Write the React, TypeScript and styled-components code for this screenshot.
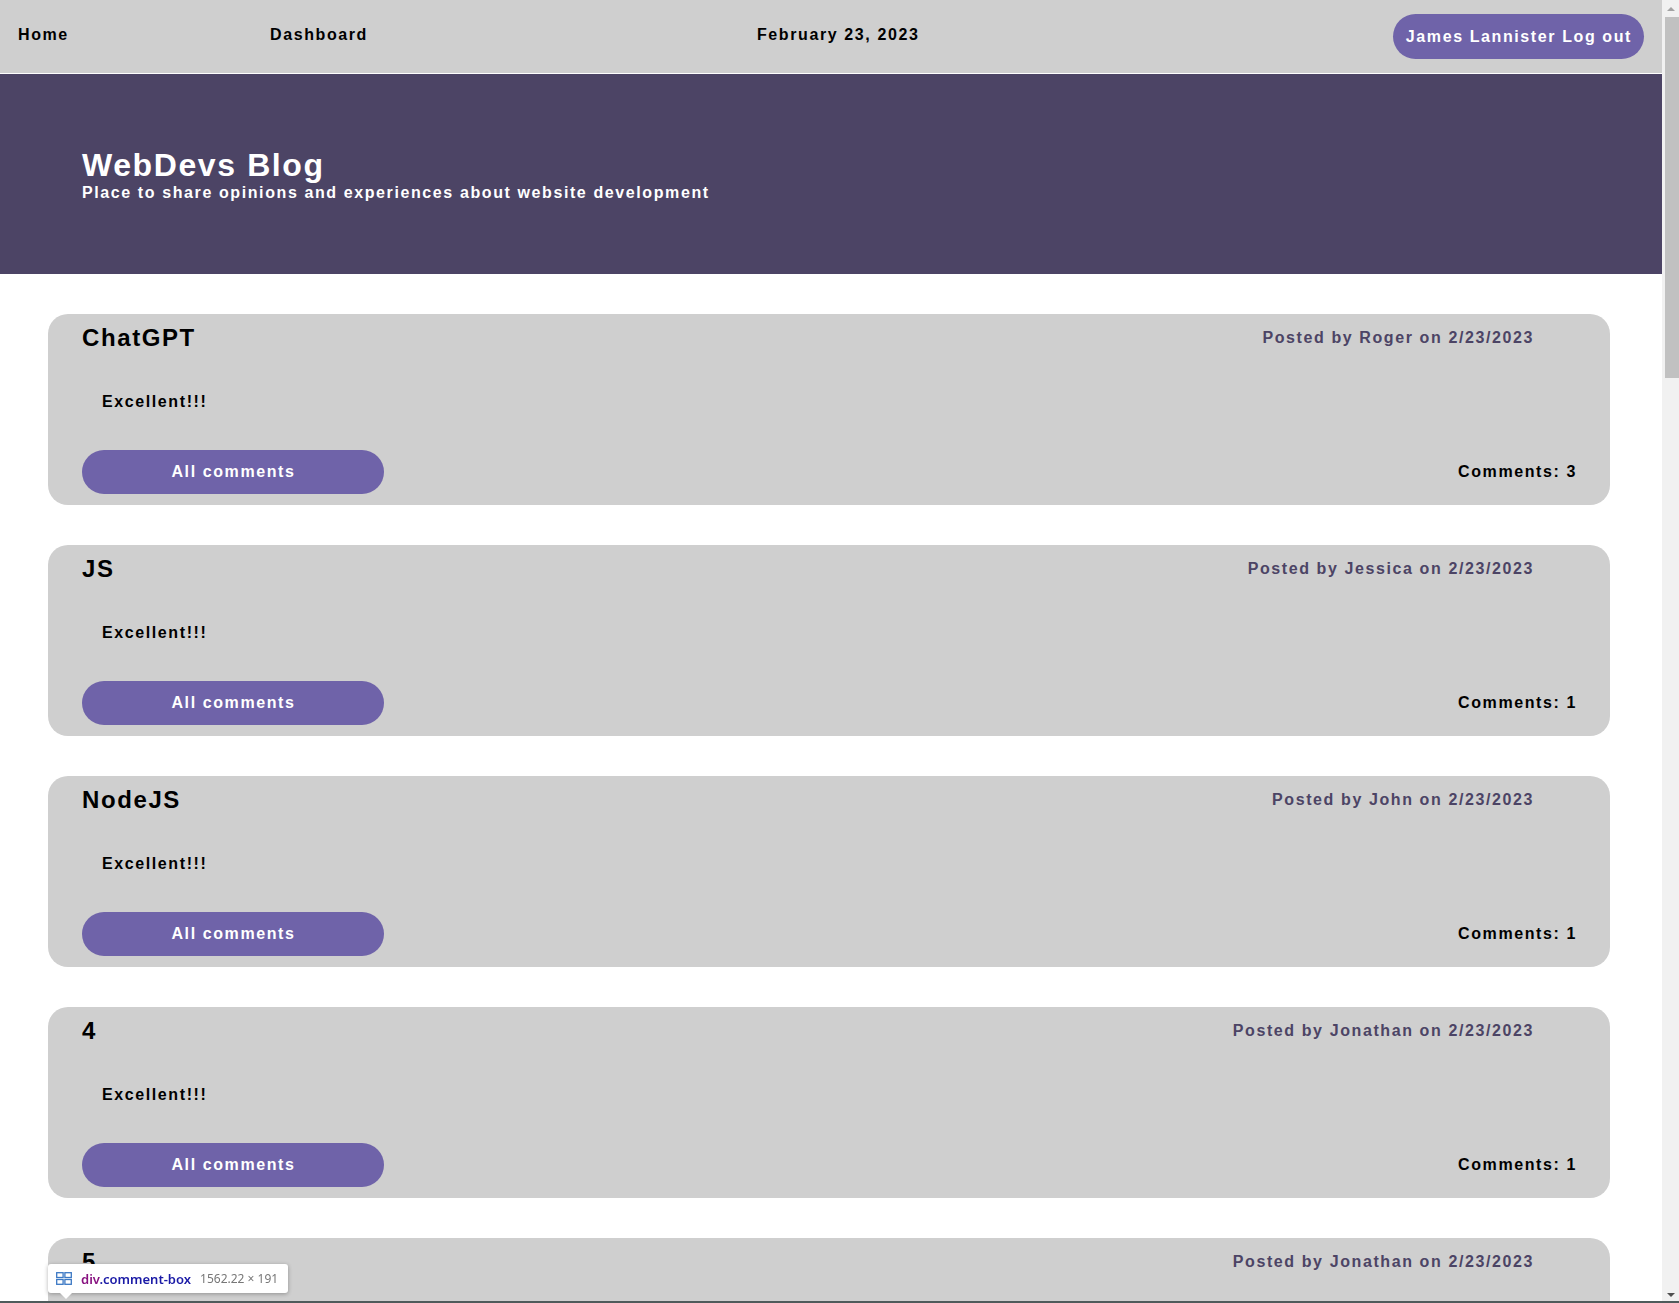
import React from "react";
import styled, { createGlobalStyle } from "styled-components";

const GlobalStyle = createGlobalStyle`
  html, body {
    margin: 0;
    padding: 0;
    background: #ffffff;
    font-family: "Liberation Sans", Arial, sans-serif;
  }
`;

const Page = styled.div`
  display: flex;
  flex-direction: column;
  margin-right: 17px;
  font-family: "Liberation Sans", Arial, sans-serif;
  font-weight: 700;
  letter-spacing: 1.6px;
`;

const NavBar = styled.nav`
  display: flex;
  align-items: center;
  height: 73px;
  padding: 0 18px;
  background: #cfcfcf;
  border-bottom: 1px solid #ffffff;
`;

const NavLeft = styled.div`
  display: flex;
  align-items: center;
  width: 739px;
  margin-bottom: 4px;
`;

const NavLink = styled.a<{ $w?: number }>`
  color: #000;
  font-size: 16px;
  font-weight: 700;
  text-decoration: none;
  width: ${(p) => (p.$w ? `${p.$w}px` : "auto")};
`;

const NavDate = styled.span`
  color: #000;
  font-size: 16px;
  font-weight: 700;
  flex: 1;
  margin-bottom: 4px;
`;

const PillButton = styled.button<{ $width?: number; $height: number }>`
  display: flex;
  align-items: center;
  justify-content: center;
  height: ${(p) => p.$height}px;
  width: ${(p) => (p.$width ? `${p.$width}px` : "auto")};
  padding: 0 12px 0 13px;
  border: none;
  border-radius: ${(p) => p.$height / 2}px;
  background: #6f63a9;
  color: #ffffff;
  font-family: "Liberation Sans", Arial, sans-serif;
  font-size: 16px;
  font-weight: 700;
  letter-spacing: 1.6px;
  cursor: pointer;
`;

const Hero = styled.header`
  box-sizing: border-box;
  display: flex;
  flex-direction: column;
  justify-content: center;
  height: 200px;
  padding: 3px 0 0 82px;
  background: #4c4465;
  color: #ffffff;
`;

const HeroTitle = styled.h1`
  margin: 0;
  font-size: 32px;
  line-height: 32px;
  font-weight: 700;
  letter-spacing: 1.6px;
`;

const HeroSubtitle = styled.p`
  margin: 3px 0 0 0;
  font-size: 16px;
  font-weight: 700;
  letter-spacing: 1.6px;
`;

const PostList = styled.main`
  display: flex;
  flex-direction: column;
  gap: 40px;
  padding: 40px 0 40px 48px;
`;

const CommentBox = styled.article`
  box-sizing: border-box;
  display: flex;
  flex-direction: column;
  width: 1562px;
  height: 191px;
  padding: 10px 33px 11px 34px;
  background: #cfcfcf;
  border-radius: 20px;
`;

const CardHeader = styled.div`
  display: flex;
  align-items: center;
  justify-content: space-between;
`;

const CardTitle = styled.h2`
  margin: 0;
  font-size: 24px;
  font-weight: 700;
  color: #000;
  letter-spacing: 1.6px;
`;

const PostedBy = styled.span`
  margin-right: 43px;
  font-size: 16px;
  font-weight: 700;
  color: #4c4465;
`;

const CardBody = styled.p`
  margin: 41px 0 39px 20px;
  font-size: 16px;
  font-weight: 700;
  color: #000;
`;

const CardFooter = styled.div`
  display: flex;
  align-items: center;
  justify-content: space-between;
`;

const CommentCount = styled.span`
  font-size: 16px;
  font-weight: 700;
  color: #000;
`;

const ScrollTrack = styled.div`
  position: fixed;
  top: 0;
  right: 0;
  bottom: 0;
  width: 17px;
  display: flex;
  flex-direction: column;
  align-items: center;
  background: #f1f1f1;
`;

const ScrollArrow = styled.div<{ $down?: boolean }>`
  width: 17px;
  height: 17px;
  display: flex;
  align-items: center;
  justify-content: center;
  &::before {
    content: "";
    border-left: 4px solid transparent;
    border-right: 4px solid transparent;
    ${(p) => (p.$down ? "border-top: 4px solid #505050;" : "border-bottom: 4px solid #a3a3a3;")}
  }
`;

const ScrollThumb = styled.div`
  width: 14px;
  height: 361px;
  margin-left: 2px;
  background: #c1c1c1;
`;

const ScrollSpace = styled.div`
  flex: 1;
`;

const InspectTip = styled.div`
  position: fixed;
  left: 48px;
  top: 1264px;
  display: flex;
  align-items: center;
  gap: 9px;
  height: 29px;
  padding: 0 10px 0 8px;
  background: #ffffff;
  border-radius: 3px;
  box-shadow: 0 1px 4px rgba(0, 0, 0, 0.3);
  font-family: "Noto Sans", "Liberation Sans", sans-serif;
  font-size: 13px;
  letter-spacing: 0;
  &::after {
    content: "";
    position: absolute;
    left: 12px;
    bottom: -6px;
    border-left: 6px solid transparent;
    border-right: 6px solid transparent;
    border-top: 6px solid #ffffff;
  }
`;

const TipTag = styled.span`
  font-weight: 600;
  color: #881280;
`;

const TipClass = styled.span`
  font-weight: 600;
  color: #1a1aa6;
`;

const TipSize = styled.span`
  font-weight: 400;
  font-size: 12px;
  color: #777;
`;

const BottomEdge = styled.div`
  position: fixed;
  left: 0;
  right: 0;
  bottom: 0;
  height: 2px;
  background: #4f5b5b;
`;

type Post = { title: string; author: string; comments: number };

const posts: Post[] = [
  { title: "ChatGPT", author: "Roger", comments: 3 },
  { title: "JS", author: "Jessica", comments: 1 },
  { title: "NodeJS", author: "John", comments: 1 },
  { title: "4", author: "Jonathan", comments: 1 },
  { title: "5", author: "Jonathan", comments: 1 },
  { title: "6", author: "Jonathan", comments: 1 },
  { title: "7", author: "Jonathan", comments: 1 },
  { title: "8", author: "Jonathan", comments: 1 },
  { title: "9", author: "Jonathan", comments: 1 },
  { title: "10", author: "Jonathan", comments: 1 },
  { title: "11", author: "Jonathan", comments: 1 },
  { title: "12", author: "Jonathan", comments: 1 },
  { title: "13", author: "Jonathan", comments: 1 },
  { title: "14", author: "Jonathan", comments: 1 },
  { title: "15", author: "Jonathan", comments: 1 },
  { title: "16", author: "Jonathan", comments: 1 },
  { title: "17", author: "Jonathan", comments: 1 },
  { title: "18", author: "Jonathan", comments: 1 },
];

const FlexIcon = () => (
  <svg width="16" height="13" viewBox="0 0 16 13" fill="none" stroke="#3b78c4" strokeWidth="1.3">
    <rect x="0.7" y="0.7" width="6.4" height="4.8" />
    <rect x="8.9" y="0.7" width="6.4" height="4.8" />
    <rect x="0.7" y="7.5" width="6.4" height="4.8" />
    <rect x="8.9" y="7.5" width="6.4" height="4.8" />
  </svg>
);

export default function App() {
  return (
    <>
      <GlobalStyle />
      <Page>
        <NavBar>
          <NavLeft>
            <NavLink href="#" $w={252}>Home</NavLink>
            <NavLink href="#">Dashboard</NavLink>
          </NavLeft>
          <NavDate>February 23, 2023</NavDate>
          <PillButton $height={45}>James Lannister Log out</PillButton>
        </NavBar>
        <Hero>
          <HeroTitle>WebDevs Blog</HeroTitle>
          <HeroSubtitle>Place to share opinions and experiences about website development</HeroSubtitle>
        </Hero>
        <PostList>
          {posts.map((p, i) => (
            <CommentBox key={i} className="comment-box">
              <CardHeader>
                <CardTitle>{p.title}</CardTitle>
                <PostedBy>Posted by {p.author} on 2/23/2023</PostedBy>
              </CardHeader>
              <CardBody>Excellent!!!</CardBody>
              <CardFooter>
                <PillButton $width={302} $height={44}>All comments</PillButton>
                <CommentCount>Comments: {p.comments}</CommentCount>
              </CardFooter>
            </CommentBox>
          ))}
        </PostList>
      </Page>
      <ScrollTrack>
        <ScrollArrow />
        <ScrollThumb />
        <ScrollSpace />
        <ScrollArrow $down />
      </ScrollTrack>
      <InspectTip>
        <FlexIcon />
        <span>
          <TipTag>div</TipTag>
          <TipClass>.comment-box</TipClass>
        </span>
        <TipSize>1562.22 × 191</TipSize>
      </InspectTip>
      <BottomEdge />
    </>
  );
}
